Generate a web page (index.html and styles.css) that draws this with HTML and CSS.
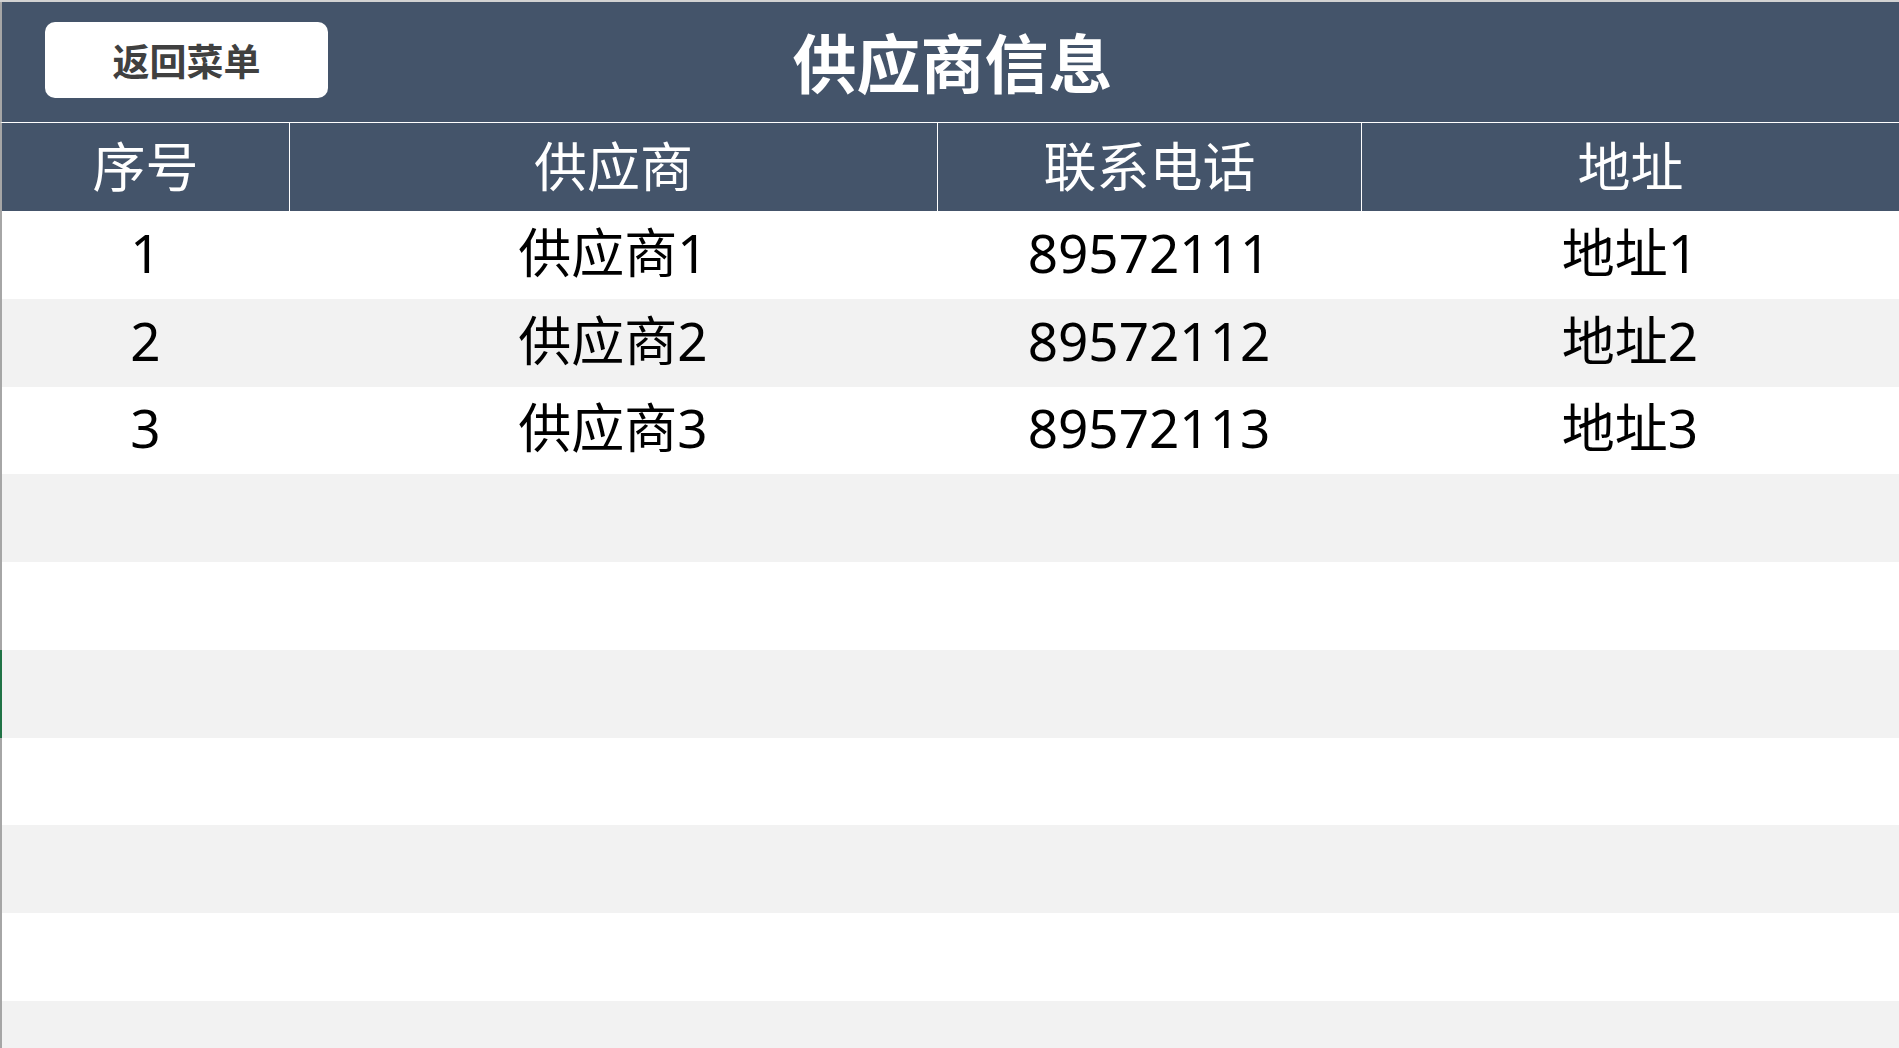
FILE: index.html
```html
<!DOCTYPE html>
<html lang="zh-CN">
<head>
<meta charset="utf-8">
<title>供应商信息</title>
<link rel="stylesheet" href="styles.css">
</head>
<body>
<div class="sheet">
  <div class="colbar"></div>
  <div class="band">
    <div class="band-left"><button class="back-btn">返回菜单</button></div>
    <div class="title">供应商信息</div>
    <div class="band-right"></div>
  </div>
  <div class="row head">
    <div class="cell">序号</div>
    <div class="cell sep">供应商</div>
    <div class="cell sep">联系电话</div>
    <div class="cell sep">地址</div>
  </div>
  <div class="row">
    <div class="cell">1</div>
    <div class="cell">供应商1</div>
    <div class="cell">89572111</div>
    <div class="cell">地址1</div>
  </div>
  <div class="row alt">
    <div class="cell">2</div>
    <div class="cell">供应商2</div>
    <div class="cell">89572112</div>
    <div class="cell">地址2</div>
  </div>
  <div class="row">
    <div class="cell">3</div>
    <div class="cell">供应商3</div>
    <div class="cell">89572113</div>
    <div class="cell">地址3</div>
  </div>
  <div class="row alt"></div>
  <div class="row"></div>
  <div class="row alt selected"></div>
  <div class="row"></div>
  <div class="row alt"></div>
  <div class="row"></div>
  <div class="row alt"></div>
</div>
</body>
</html>
```

FILE: styles.css
```css
html, body {
  margin: 0;
  padding: 0;
  background: #ffffff;
  overflow: hidden;
}

body {
  width: 1899px;
  height: 1048px;
  font-family: "Noto Sans", "Noto Sans CJK SC", sans-serif;
}

.sheet {
  display: flex;
  flex-direction: column;
  width: 1899px;
}

.colbar {
  height: 2px;
  background: #d2d2d2;
}

.band {
  display: grid;
  grid-template-columns: 1fr auto 1fr;
  height: 120px;
  background: #44546a;
  border-left: 2px solid #a6a6a6;
  border-bottom: 1px solid #ffffff;
}

.band-left {
  display: flex;
  align-items: flex-start;
  padding-top: 20px;
  padding-left: 43px;
}

.back-btn {
  width: 283px;
  height: 76px;
  border: none;
  border-radius: 10px;
  background: #ffffff;
  color: #404040;
  font-family: "Noto Sans CJK SC", sans-serif;
  font-weight: 700;
  font-size: 37px;
  line-height: 1;
  padding: 0;
  letter-spacing: 0;
}

.title {
  display: flex;
  align-items: center;
  justify-content: center;
  color: #ffffff;
  font-family: "Noto Sans CJK SC", sans-serif;
  font-weight: 700;
  font-size: 64px;
  line-height: 1;
  padding-left: 4px;
  padding-bottom: 5px;
}

.row {
  display: grid;
  grid-template-columns: 287px 648px 424px 538px;
  height: 87.75px;
  background: #ffffff;
  border-left: 2px solid #a6a6a6;
}

.row.alt {
  background: #f2f2f2;
}

.row.selected {
  border-left-color: #217346;
}

.row.head {
  height: 88px;
  background: #44546a;
  color: #ffffff;
}

.cell {
  display: flex;
  align-items: center;
  justify-content: center;
  font-size: 53px;
  line-height: 1;
  color: #000000;
  white-space: nowrap;
  padding-bottom: 5px;
}

.head .cell {
  color: #ffffff;
  padding-bottom: 2px;
}

.cell.sep {
  border-left: 1px solid #ffffff;
}
```
